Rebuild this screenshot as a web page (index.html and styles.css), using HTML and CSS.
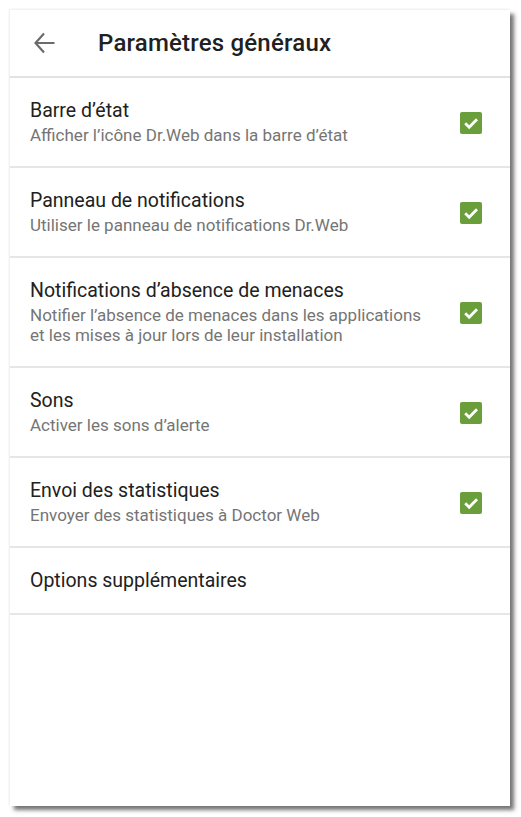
FILE: index.html
```html
<!DOCTYPE html>
<html lang="fr">
<head>
<meta charset="utf-8">
<title>Paramètres généraux</title>
<link rel="stylesheet" href="styles.css">
</head>
<body>
<div class="screen">
  <header class="appbar">
    <svg class="back" width="28" height="28" viewBox="0 0 28 28" aria-hidden="true">
      <path d="M4.5 14H23.5M13 4.5L4.5 14L13 23.5" fill="none" stroke="#6b6b6b" stroke-width="2.2" stroke-linecap="butt" stroke-linejoin="miter"/>
    </svg>
    <h1 class="title">Paramètres généraux</h1>
  </header>
  <ul class="list">
    <li class="row">
      <div class="text">
        <div class="primary">Barre d’état</div>
        <div class="secondary">Afficher l’icône Dr.Web dans la barre d’état</div>
      </div>
      <span class="check"><svg viewBox="0 0 22 22" width="22" height="22"><path d="M5.2 11.2L9.2 15.2L17 7.2" fill="none" stroke="#fff" stroke-width="2.8"/></svg></span>
    </li>
    <li class="row">
      <div class="text">
        <div class="primary">Panneau de notifications</div>
        <div class="secondary">Utiliser le panneau de notifications Dr.Web</div>
      </div>
      <span class="check"><svg viewBox="0 0 22 22" width="22" height="22"><path d="M5.2 11.2L9.2 15.2L17 7.2" fill="none" stroke="#fff" stroke-width="2.8"/></svg></span>
    </li>
    <li class="row">
      <div class="text">
        <div class="primary">Notifications d’absence de menaces</div>
        <div class="secondary">Notifier l’absence de menaces dans les applications<br>et les mises à jour lors de leur installation</div>
      </div>
      <span class="check"><svg viewBox="0 0 22 22" width="22" height="22"><path d="M5.2 11.2L9.2 15.2L17 7.2" fill="none" stroke="#fff" stroke-width="2.8"/></svg></span>
    </li>
    <li class="row">
      <div class="text">
        <div class="primary">Sons</div>
        <div class="secondary">Activer les sons d’alerte</div>
      </div>
      <span class="check"><svg viewBox="0 0 22 22" width="22" height="22"><path d="M5.2 11.2L9.2 15.2L17 7.2" fill="none" stroke="#fff" stroke-width="2.8"/></svg></span>
    </li>
    <li class="row">
      <div class="text">
        <div class="primary">Envoi des statistiques</div>
        <div class="secondary">Envoyer des statistiques à Doctor Web</div>
      </div>
      <span class="check"><svg viewBox="0 0 22 22" width="22" height="22"><path d="M5.2 11.2L9.2 15.2L17 7.2" fill="none" stroke="#fff" stroke-width="2.8"/></svg></span>
    </li>
    <li class="row">
      <div class="text">
        <div class="primary">Options supplémentaires</div>
      </div>
    </li>
  </ul>
</div>
</body>
</html>
```
FILE: styles.css
```css
html, body {
  margin: 0;
  padding: 0;
  background: #ffffff;
}
body {
  font-family: Roboto, "Noto Sans", "Liberation Sans", sans-serif;
  padding: 10px;
  width: 521px;
  height: 817px;
  box-sizing: border-box;
  overflow: hidden;
}
.screen {
  width: 500px;
  height: 796px;
  background: #ffffff;
  box-shadow: 4px 4px 4px rgba(0, 0, 0, 0.55), -1px -1px 2px rgba(0, 0, 0, 0.07);
}
.appbar {
  height: 66px;
  display: flex;
  align-items: center;
  border-bottom: 2px solid #e2e2e2;
  padding-left: 21px;
}
.back {
  display: block;
  margin-right: 39px;
}
.title {
  margin: 0;
  font-size: 24px;
  letter-spacing: 0.2px;
  font-weight: 500;
  color: #212121;
}
.list {
  list-style: none;
  margin: 0;
  padding: 0;
}
.row {
  display: flex;
  align-items: center;
  padding: 22px 28px 21px 20px;
  border-bottom: 2px solid #e6e6e6;
}
.text {
  flex: 1;
}
.primary {
  font-size: 19.5px;
  line-height: 22px;
  color: #212121;
}
.secondary {
  margin-top: 3px;
  font-size: 17px;
  line-height: 20px;
  color: #757575;
}
.check {
  width: 22px;
  height: 22px;
  border-radius: 2px;
  background: #6a9e3a;
  display: block;
}
.check svg {
  display: block;
}
```
